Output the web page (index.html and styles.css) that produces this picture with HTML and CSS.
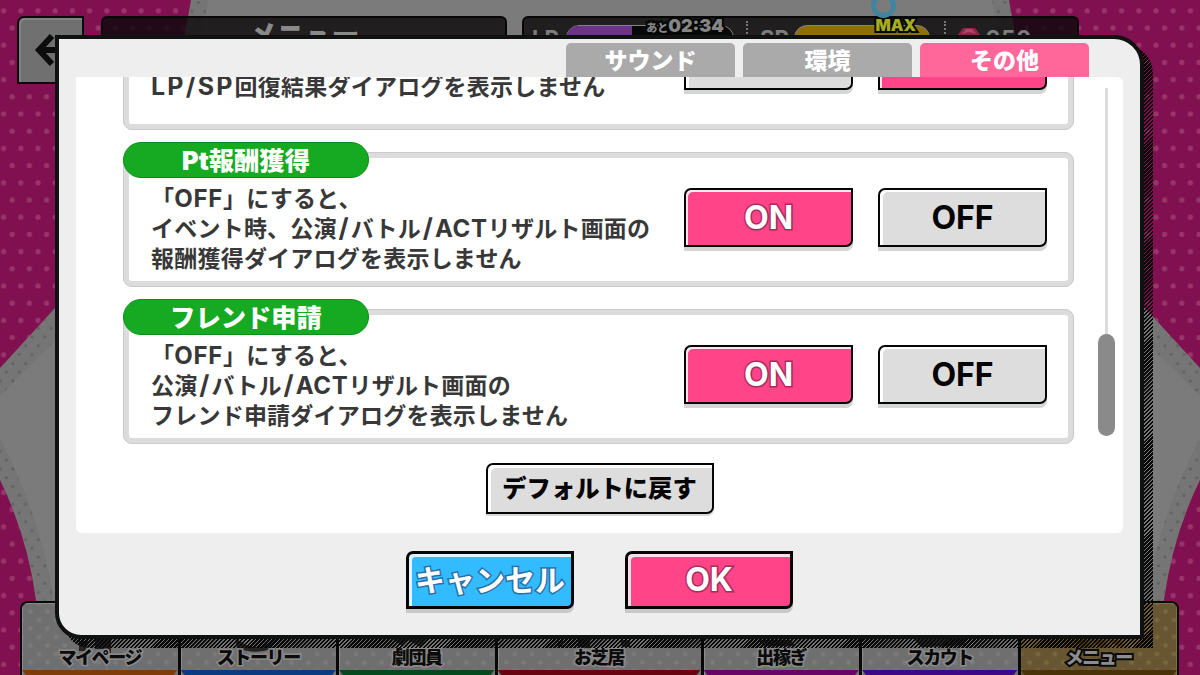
FILE: index.html
```html
<!DOCTYPE html>
<html lang="ja">

<head>
    <meta charset="UTF-8">
    <meta name="viewport" content="width=device-width, initial-scale=1.0">
    <title>メニュー</title>
    <link rel="stylesheet" href="styles.css">
</head>

<body>

    <!-- Dotted star background -->
    <svg class="backdrop" width="1200" height="675" viewBox="0 0 1200 675">
        <defs>
            <pattern id="pinkDots" width="17.2" height="34.4" patternUnits="userSpaceOnUse" patternTransform="translate(-5 2)">
                <circle cx="8.6" cy="8.8" r="2.6" fill="#99356b" />
                <circle cx="0" cy="26" r="2.6" fill="#99356b" />
                <circle cx="17.2" cy="26" r="2.6" fill="#99356b" />
            </pattern>
            <pattern id="grayDots" width="12.8" height="17.6" patternUnits="userSpaceOnUse">
                <circle cx="6.4" cy="2.6" r="1.5" fill="#5f6060" />
                <circle cx="0" cy="11.4" r="1.5" fill="#5f6060" />
                <circle cx="12.8" cy="11.4" r="1.5" fill="#5f6060" />
            </pattern>
            <path id="star" d="M191 0 Q160 190 55 308 L0 368 V480 Q27 535 36 600 L40 675 H1160 L1164 600 Q1173 535 1200 480 V368 L1145 308 Q1040 190 1009 0 Z" />
        </defs>
        <rect width="1200" height="675" fill="#80104f" />
        <rect width="1200" height="675" fill="url(#pinkDots)" />
        <use href="#star" fill="#757575" />
        <use href="#star" fill="url(#grayDots)" />
        <path fill="#7b7b7b" d="M208 0 Q170 220 55 341 L0 396 V438 Q42 520 54 600 L58 675 H1142 L1146 600 Q1158 520 1200 438 V396 L1145 341 Q1030 220 992 0 Z" />
    </svg>

    <div class="screen">
        <header class="topbar">
            <button type="button" class="back">
                <svg width="40" height="34" viewBox="0 0 40 34" fill="none" stroke="#0c0c0c" stroke-width="6">
                    <path d="M18 3 L5 17 L18 31 M5 17 H38" />
                </svg>
            </button>
            <div class="title">メニュー</div>
            <div class="status">
                <span class="stat-name">LP</span>
                <div class="gauge gauge-lp"><i></i><b><small>あと</small>02:34</b></div>
                <span class="dots"></span>
                <span class="stat-name">SP</span>
                <div class="gauge gauge-sp"><b>MAX</b></div>
                <span class="dots dots-last"></span>
                <svg class="jewel" width="24" height="20" viewBox="0 0 24 20">
                    <path d="M0 9 L6 1 H18 L24 9 L12 20 Z" fill="#8e2448" />
                    <path d="M5 7 L9 2 H15 L19 7 L12 5 Z" fill="#a84a68" />
                </svg>
                <span class="stat-name count">950</span>
            </div>
        </header>

        <nav class="menu">
            <a class="item mypage"><svg width="70" height="24" viewBox="0 0 70 24"><path d="M14 4 L24 4 L20 14 H14 Z M30 0 H46 V16 H38 V12 H30 Z" /></svg><span>マイページ</span><i></i></a>
            <a class="item story"><svg width="70" height="24" viewBox="0 0 70 24"><path d="M12 0 Q32 20 54 0 L48 12 Q32 18 14 11 Z" /></svg><span>ストーリー</span><i></i></a>
            <a class="item member"><svg width="70" height="24" viewBox="0 0 70 24"><path d="M12 3 L20 9 L26 3 L38 10 L46 3 V0 H12 Z" /></svg><span>劇団員</span><i></i></a>
            <a class="item play wide"><svg width="90" height="24" viewBox="0 0 90 24"><path d="M4 4 H10 L8 10 H4 Z M24 2 H36 V11 H24 Z M46 3 H66 L68 10 H76 V3 Z" /></svg><span>お芝居</span><i></i></a>
            <a class="item work"><svg width="70" height="24" viewBox="0 0 70 24"><path d="M12 3 H44 L50 9 H18 Z" /></svg><span>出稼ぎ</span><i></i></a>
            <a class="item scout"><svg width="70" height="24" viewBox="0 0 70 24"><path d="M8 1 L16 10 H24 L60 8 V1 Z" /></svg><span>スカウト</span><i></i></a>
            <a class="item other"><svg width="70" height="24" viewBox="0 0 70 24"><path d="M10 3 H22 L28 11 H18 Z M28 3 H40 L46 11 H36 Z M44 3 H56 L60 9 H52 Z" /></svg><span>メニュー</span><i></i></a>
        </nav>
    </div>

    <div class="ring"></div>

    <!-- Settings dialog -->
    <div class="dialog-shadow"></div>
    <main class="dialog">
        <div class="tabs">
            <button type="button" class="tab">サウンド</button>
            <button type="button" class="tab">環境</button>
            <button type="button" class="tab active">その他</button>
        </div>

        <div class="panel">
            <div class="list">
                <section class="card">
                    <h2>LP/SP回復</h2>
                    <div class="row">
                        <p>「<span>OFF</span>」にすると、<br><span class="loose">LP/SP</span>回復結果ダイアログを表示しません</p>
                        <button type="button" class="btn gray">OFF</button>
                        <button type="button" class="btn pink">ON</button>
                    </div>
                </section>
                <section class="card">
                    <h2>Pt報酬獲得</h2>
                    <div class="row">
                        <p>「<span>OFF</span>」にすると、<br>イベント時、公演<i>/</i>バトル<i>/</i><span>ACT</span>リザルト画面の<br>報酬獲得ダイアログを表示しません</p>
                        <button type="button" class="btn pink">ON</button>
                        <button type="button" class="btn gray">OFF</button>
                    </div>
                </section>
                <section class="card">
                    <h2>フレンド申請</h2>
                    <div class="row">
                        <p>「<span>OFF</span>」にすると、<br>公演<i>/</i>バトル<i>/</i><span>ACT</span>リザルト画面の<br>フレンド申請ダイアログを表示しません</p>
                        <button type="button" class="btn pink">ON</button>
                        <button type="button" class="btn gray">OFF</button>
                    </div>
                </section>
                <button type="button" class="btn gray reset">デフォルトに戻す</button>
            </div>
            <div class="scroll"><div class="thumb"></div></div>
        </div>

        <div class="actions">
            <button type="button" class="btn blue big">キャンセル</button>
            <button type="button" class="btn pink big">OK</button>
        </div>
    </main>

</body>

</html>
```
FILE: styles.css
```css
* {
    box-sizing: border-box;
}

body {
    position: relative;
    width: 1200px;
    height: 675px;
    margin: 0;
    overflow: hidden;
    background-color: #80104f;
    font-family: Inter, "Noto Sans CJK JP", sans-serif;
    font-weight: 700;
}

button {
    margin: 0;
    padding: 0;
    font: inherit;
    white-space: nowrap;
    cursor: pointer;
}

.backdrop {
    position: absolute;
    top: 0;
    left: 0;
}

.screen {
    position: relative;
    display: flex;
    flex-direction: column;
    justify-content: space-between;
    height: 675px;
}

/* Top bar */
.topbar {
    display: flex;
    align-items: flex-start;
    padding: 16px 0 0 17px;
}

.back {
    display: flex;
    align-items: center;
    width: 67px;
    height: 68px;
    padding-left: 15px;
    border: 2px solid #0a0a0a;
    border-radius: 7px 0 0 0;
    background-color: #707070;
    box-shadow: inset 2px 2px 0 #828282;
}

.title {
    width: 406px;
    height: 50px;
    margin-left: 17px;
    border: 2px solid #070707;
    border-radius: 6px;
    background-color: rgba(10, 8, 9, 0.8);
    color: #8a8a8a;
    font-size: 28px;
    font-weight: 900;
    line-height: 37px;
    text-align: center;
    letter-spacing: -0.6px;
}

.status {
    display: flex;
    align-items: flex-start;
    width: 557px;
    height: 50px;
    margin-left: 15px;
    padding: 7px 0 0 8px;
    border: 2px solid #070707;
    border-radius: 6px;
    background-color: rgba(10, 8, 9, 0.8);
}

.stat-name {
    width: 34px;
    margin-top: 0;
    color: #7d7d7d;
    font-size: 22px;
    line-height: 26px;
}

.gauge {
    position: relative;
    height: 26px;
    border: 1.5px solid #858585;
    border-radius: 13px;
    background-color: #080808;
}

.gauge-lp {
    width: 168px;
}

.gauge i {
    display: block;
    width: 65px;
    height: 23px;
    border-radius: 12px 0 0 12px;
    background-color: #6d338a;
}

.gauge b {
    position: absolute;
    top: -10px;
    right: 9px;
    color: #858585;
    font-size: 18px;
    line-height: 20px;
    white-space: nowrap;
    -webkit-text-stroke: 4px #070707;
    paint-order: stroke fill;
}

.gauge small {
    font-size: 11px;
}

.gauge-sp {
    width: 136px;
    background-color: #8f6f0a;
}

.gauge-sp b {
    top: -11px;
    right: 13px;
    color: #a5ad1a;
    font-size: 16px;
}

.dots {
    width: 0;
    height: 28px;
    margin: -4px 12px 0 12px;
    border-left: 2px dotted #777;
}

.dots-last {
    margin: -4px 11px 0 14px;
}

.jewel {
    margin-top: 2px;
}

.count {
    margin-left: 5px;
    letter-spacing: 1px;
}

.ring {
    position: absolute;
    top: -7px;
    left: 871px;
    width: 25px;
    height: 25px;
    border: 5px solid #41849e;
    border-radius: 50%;
}

/* Bottom menu */
.menu {
    display: flex;
    width: 1159px;
    height: 74px;
    margin-left: 20px;
    border: 2px solid #080808;
    border-bottom: none;
    border-radius: 8px 8px 0 0;
    background-color: #080808;
    overflow: hidden;
}

.item {
    display: flex;
    flex-direction: column;
    align-items: center;
    flex: 0 0 158.5px;
    border-right: 3px solid #080808;
    background-color: #6f6f6f;
    background-image: radial-gradient(circle, #7a7a7a 2px, transparent 2.5px), radial-gradient(circle, #7a7a7a 2px, transparent 2.5px);
    background-size: 17px 17px;
    background-position: 0 0, 8.5px 8.5px;
    box-shadow: inset 1px 1px 0 #8a8a8a;
}

.item:last-child {
    flex: 1;
    border-right: none;
}

.item.wide {
    flex-basis: 206px;
}

.item svg {
    margin-top: 34px;
    fill: #222;
}

.item span {
    height: 20px;
    margin-top: -13px;
    color: #0b0b0b;
    font-size: 18px;
    font-weight: 900;
    line-height: 20px;
    letter-spacing: -1.4px;
    -webkit-text-stroke: 3px #8a8a8a;
    paint-order: stroke fill;
}

.item i {
    width: 100%;
    height: 5px;
    margin-top: auto;
    clip-path: polygon(0 0, 100% 0, calc(100% - 4px) 100%, 4px 100%);
}

.mypage i { background-color: #803c08; }
.story i { background-color: #0a3a80; }
.member i { background-color: #054a1e; }
.play i { background-color: #68040f; }
.work i { background-color: #680468; }
.scout i { background-color: #3d0788; }
.other i { background-color: #4a3208; }

.other {
    background-color: #675631;
    background-image: radial-gradient(circle, #79683e 2px, transparent 2.5px), radial-gradient(circle, #79683e 2px, transparent 2.5px);
    box-shadow: inset -1px 1px 0 #80704a;
}

.other svg {
    fill: #5c3f06;
}

.other span {
    color: #8d8d8d;
    -webkit-text-stroke: 4px #0b0b0b;
}

/* Dialog */
.dialog,
.dialog-shadow {
    position: absolute;
    top: 35px;
    left: 55px;
    width: 1089px;
    height: 604px;
    border-radius: 0 30px 0 26px;
}

.dialog-shadow {
    top: 44px;
    left: 64px;
    background: repeating-linear-gradient(135deg, #080808 0, #080808 1.6px, transparent 1.9px, transparent 2.8px);
}

.dialog {
    padding: 4px 17px 0;
    border: 4px solid #101212;
    background-color: #eee;
}

.tabs {
    display: flex;
    justify-content: flex-end;
    gap: 8px;
    padding-right: 34px;
}

.tab {
    width: 169px;
    height: 34px;
    border: none;
    border-radius: 5px 5px 0 0;
    background-color: #aaa;
    color: #fff;
    font-size: 23px;
    font-weight: 900;
    line-height: 36px;
}

.tab.active {
    background-color: #ff6699;
}

.panel {
    display: flex;
    height: 456px;
    padding-left: 47px;
    border-radius: 0 6px 6px 6px;
    background-color: #fff;
    overflow: hidden;
}

.list {
    display: flex;
    flex-direction: column;
    gap: 23px;
    width: 951px;
    margin-top: -82px; /* scrolled down to the last entries */
}

.card {
    flex: none;
    height: 135px;
    margin-bottom: -1px;
    border: 6px solid #dcdcdc;
    border-radius: 9px;
    outline: 1px solid #cbcbcb;
    outline-offset: -1px;
}

.card h2 {
    position: relative;
    width: 246px;
    height: 36px;
    margin: -16px 0 0 -6px;
    border: 1px solid #0d8f1c;
    border-radius: 18px;
    background-color: #15aa22;
    color: #fff;
    font-size: 25.3px;
    font-weight: 900;
    line-height: 36px;
    text-align: center;
}

.row {
    display: flex;
    align-items: flex-start;
    height: 104px;
    padding: 0 21px 0 22px;
}

.row p {
    align-self: center;
    flex: 1;
    margin: 0;
    color: #383838;
    font-size: 23px;
    line-height: 29.7px;
    letter-spacing: 0.22px;
    white-space: nowrap;
}

.row p span {
    font-size: 24px;
    line-height: 20px;
    letter-spacing: 0.7px;
}

.row p .loose {
    font-size: 25px;
    letter-spacing: 2.2px;
}

.row p i {
    padding: 0 1.8px;
    font-size: 26px;
    font-style: normal;
    line-height: 20px;
}

.row .btn {
    margin-top: 10px;
    margin-left: 25px;
}

.btn {
    width: 169px;
    height: 59px;
    border: 2px solid #050505;
    border-radius: 7px 0 7px 0;
    font-size: 32px;
    line-height: 53px;
}

.gray {
    background-color: #ddd;
    box-shadow: inset 3px 2px 0 #fff, 0 4px 0 #d3d6d4;
    color: #050505;
}

.pink {
    background-color: #ff4488;
    box-shadow: inset 2px 2px 0 #ffe6ef, 0 4px 0 #d3d6d4;
    color: #fff;
    -webkit-text-stroke: 3px #a82a5e;
    paint-order: stroke fill;
}

.blue {
    background-color: #33bbff;
    box-shadow: inset 3px 3px 0 #def4ff, 0 4px 0 #c8c8c8;
    color: #fff;
    -webkit-text-stroke: 3px #2a70a8;
    paint-order: stroke fill;
}

.reset {
    align-self: center;
    flex: none;
    width: 228px;
    height: 51px;
    margin: -3px 0 0 2px;
    box-shadow: inset 3px 3px 0 #fff, 0 2px 0 #d8d8d8;
    font-size: 24.3px;
    font-weight: 900;
    line-height: 47px;
}

.scroll {
    display: flex;
    align-items: flex-end;
    width: 17px;
    height: 348px;
    margin: 11px 0 0 24px;
    background: linear-gradient(#dcdcdc, #dcdcdc) center / 3px 100% no-repeat;
}

.thumb {
    width: 17px;
    height: 102px;
    border-radius: 9px;
    background-color: #8a8a8a;
}

.actions {
    display: flex;
    justify-content: center;
    gap: 51px;
    margin-top: 18px;
}

.big {
    width: 168px;
    height: 58px;
    border-width: 3px;
    line-height: 52px;
}

.big.pink {
    box-shadow: inset 3px 3px 0 #ffe0ea, 0 4px 0 #c8c8c8;
}

.big.blue {
    font-size: 30px;
    line-height: 50px;
}
```
